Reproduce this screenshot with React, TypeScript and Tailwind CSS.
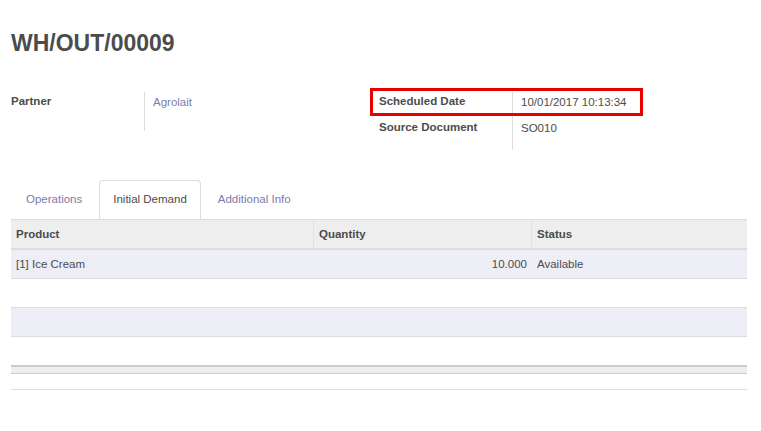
const rows = [
  { product: "[1] Ice Cream", qty: "10.000", status: "Available" },
  { product: "", qty: "", status: "" },
  { product: "", qty: "", status: "" },
  { product: "", qty: "", status: "" },
];

export default function App() {
  return (
    <div className="relative min-h-[431px] bg-white pl-[11px] pr-[14px] pt-[30px] font-['Liberation_Sans',Arial,sans-serif] text-[11.5px] text-[#4c4c4c]">
      <h1 className="text-[23px] font-bold leading-[26px]">WH/OUT/00009</h1>

      <div className="mt-[36px] grid grid-cols-2">
        <div className="grid grid-cols-[134px_1fr] content-start">
          <div className="h-[39px] border-r border-[#ddd] pt-[1px] font-bold leading-4">Partner</div>
          <div className="pl-2 pt-[2px] leading-4 text-[#7c7bad]">Agrolait</div>
        </div>
        <div className="grid grid-cols-[134px_1fr] content-start">
          <div className="h-[26px] border-r border-[#ddd] pt-[1px] font-bold leading-4">Scheduled Date</div>
          <div className="pl-2 pt-[2px] leading-4">10/01/2017 10:13:34</div>
          <div className="h-[32px] border-r border-[#ddd] pt-[1px] font-bold leading-4">Source Document</div>
          <div className="pl-2 pt-[2px] leading-4">SO010</div>
        </div>
      </div>

      <div className="mt-[30px] flex">
        <div className="mr-[2px] flex h-[39px] items-center rounded-t-[4px] border border-b-0 border-transparent px-[14px] text-[#7c7bad]">
          Operations
        </div>
        <div className="mr-[2px] flex h-[39px] items-center rounded-t-[4px] border border-b-0 border-[#ddd] bg-white px-[13px]">
          Initial Demand
        </div>
        <div className="flex h-[39px] items-center rounded-t-[4px] border border-b-0 border-transparent px-[14px] text-[#7c7bad]">
          Additional Info
        </div>
      </div>

      <div className="border-t border-[#ddd]">
        <div className="grid h-[30px] grid-cols-[303px_218px_1fr] border-b-2 border-[#ddd] bg-[#eeeeee] font-bold">
          <div className="flex items-center border-r border-[#e2e2e2] px-[5px] pt-[1px]">Product</div>
          <div className="flex items-center border-r border-[#e2e2e2] px-[5px] pt-[1px]">Quantity</div>
          <div className="flex items-center px-[5px] pt-[1px]">Status</div>
        </div>
        {rows.map((r, i) => (
          <div
            key={i}
            className={
              "grid grid-cols-[303px_218px_1fr] " +
              (i % 2 === 0 ? "bg-[#eeeef7] " : "bg-white ") +
              (i < 3 ? "h-[29px] border-b border-[#ddd]" : "h-[28px]")
            }
          >
            <div className="flex items-center px-[5px] pt-[1px]">{r.product}</div>
            <div className="flex items-center justify-end px-[5px] pt-[1px]">{r.qty}</div>
            <div className="flex items-center px-[5px] pt-[1px]">{r.status}</div>
          </div>
        ))}
        <div className="h-[9px] border-t-2 border-b border-[#cccccc] bg-[#eeeeee]" />
        <div className="mt-[15px] border-t border-[#ddd]" />
      </div>

      <div className="absolute left-[370px] top-[88px] h-[28px] w-[273px] border-[3px] border-[#e60000]" />
    </div>
  );
}
